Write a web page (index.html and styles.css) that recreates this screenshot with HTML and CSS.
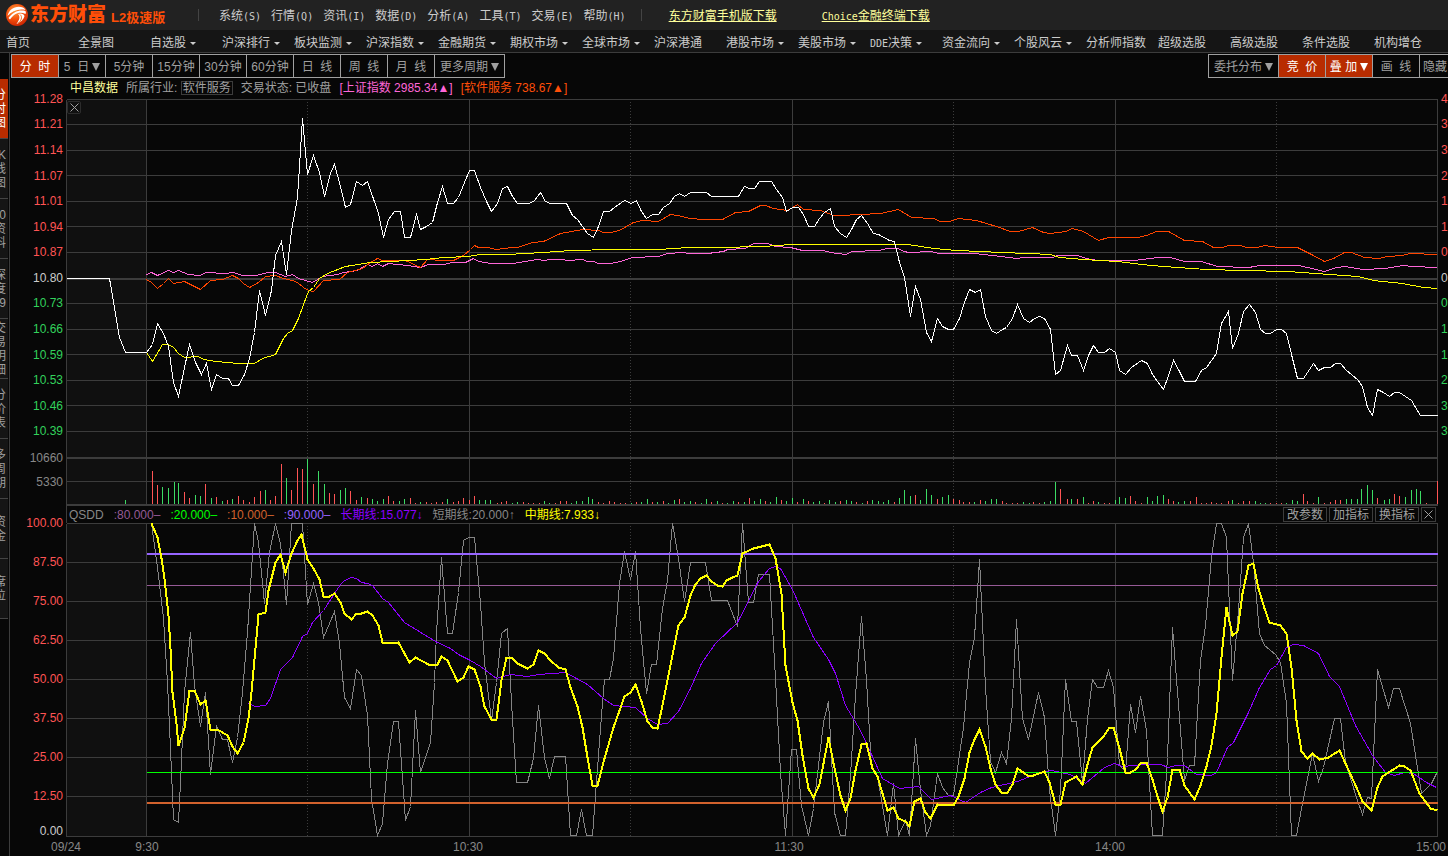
FILE: index.html
```html
<!DOCTYPE html>
<html lang="zh-CN">
<head>
<meta charset="utf-8">
<title>东方财富 L2极速版</title>
<link rel="stylesheet" href="styles.css">
</head>
<body>
<header class="titlebar">
  <div class="brand">
    <svg class="brand-mark" viewBox="0 0 22 22" aria-hidden="true">
      <defs><radialGradient id="ball" cx="0.4" cy="0.3" r="0.8"><stop offset="0" stop-color="#ff9a3c"/><stop offset="0.5" stop-color="#f4500c"/><stop offset="1" stop-color="#c41a00"/></radialGradient></defs>
      <circle cx="11" cy="11" r="11" fill="url(#ball)"/>
      <path d="M1.5 12C3 5 10 1 17 3.500C18 4 19 5 19.500 6C12 4.500 6 7 1.500 12Z" fill="#fff"/>
      <path d="M2.500 14C7 8 13 5.500 19.500 7C20 8 20 9 19.500 10C13 7 8 10 4 15.500Z" fill="#fff"/>
      <path d="M12 10C15 8.500 18 10 18.500 12C18 15 15 18 10.500 20C13.500 16 14.500 12.500 12 10Z" fill="#fff"/>
      <path d="M14 10.500C17 13 15 17 12 19.500" fill="none" stroke="#f26a1c"/>
    </svg>
    <span class="brand-name">东方财富</span>
    <span class="brand-edition">L2极速版</span>
  </div>
  <nav class="menu" aria-label="主菜单">
    <button type="button">系统<span class="half">(S)</span></button>
    <button type="button">行情<span class="half">(Q)</span></button>
    <button type="button">资讯<span class="half">(I)</span></button>
    <button type="button">数据<span class="half">(D)</span></button>
    <button type="button">分析<span class="half">(A)</span></button>
    <button type="button">工具<span class="half">(T)</span></button>
    <button type="button">交易<span class="half">(E)</span></button>
    <button type="button">帮助<span class="half">(H)</span></button>
  </nav>
  <div class="downloads">
    <a href="#mobile">东方财富手机版下载</a>
    <a href="#choice"><span class="half">Choice</span>金融终端下载</a>
  </div>
</header>
<nav class="channels" aria-label="频道">
  <a href="#1">首页</a>
  <a href="#2">全景图</a>
  <a href="#3" class="more">自选股</a>
  <a href="#4" class="more">沪深排行</a>
  <a href="#5" class="more">板块监测</a>
  <a href="#6" class="more">沪深指数</a>
  <a href="#7" class="more">金融期货</a>
  <a href="#8" class="more">期权市场</a>
  <a href="#9" class="more">全球市场</a>
  <a href="#10">沪深港通</a>
  <a href="#11" class="more">港股市场</a>
  <a href="#12" class="more">美股市场</a>
  <a href="#13" class="more"><span class="half">DDE</span>决策</a>
  <a href="#14" class="more">资金流向</a>
  <a href="#15" class="more">个股风云</a>
  <a href="#16">分析师指数</a>
  <a href="#17">超级选股</a>
  <a href="#18">高级选股</a>
  <a href="#19">条件选股</a>
  <a href="#20">机构增仓</a>
</nav>
<div class="workspace">
  <aside class="tabs">
    <button type="button" class="active"><span>分</span><span>时</span><span>图</span></button>
    <button type="button"><span>K</span><span>线</span><span>图</span></button>
    <button type="button"><span>10</span><span>资</span><span>料</span></button>
    <button type="button"><span>深</span><span>度</span><span>F9</span></button>
    <button type="button"><span>交</span><span>易</span><span>明</span><span>细</span></button>
    <button type="button"><span>分</span><span>价</span><span>表</span></button>
    <button type="button"><span>多</span><span>周</span><span>期</span></button>
    <button type="button"><span>资</span><span>金</span></button>
    <button type="button"><span>席</span><span>位</span></button>
  </aside>
  <main class="board">
    <div class="toolbar">
      <div class="group">
        <button type="button" class="on">分&nbsp; 时</button>
        <button type="button">5 &nbsp;日<i class="down"></i></button>
        <button type="button">5分钟</button>
        <button type="button">15分钟</button>
        <button type="button">30分钟</button>
        <button type="button">60分钟</button>
        <button type="button">日&nbsp; 线</button>
        <button type="button">周&nbsp; 线</button>
        <button type="button">月&nbsp; 线</button>
        <button type="button" class="wide">更多周期<i class="down"></i></button>
      </div>
      <div class="group group-end">
        <button type="button" class="wide">委托分布<i class="down"></i></button>
        <button type="button" class="on">竞&nbsp; 价</button>
        <button type="button" class="on">叠 加<i class="down"></i></button>
        <button type="button">画&nbsp; 线</button>
        <button type="button" class="start">隐藏</button>
      </div>
    </div>
    <div class="chart">
      <div class="axis axis-left">
        <div class="scale scale-price up">
          <span>11.28</span><span>11.21</span><span>11.14</span><span>11.07</span><span>11.01</span><span>10.94</span><span>10.87</span><span class="flat">10.80</span><span class="dn">10.73</span><span class="dn">10.66</span><span class="dn">10.59</span><span class="dn">10.53</span><span class="dn">10.46</span><span class="dn">10.39</span>
        </div>
        <div class="scale scale-volume"><span>10660</span><span>5330</span></div>
        <div class="scale scale-index up"><span>100.00</span><span>87.50</span><span>75.00</span><span>62.50</span><span>50.00</span><span>37.50</span><span>25.00</span><span>12.50</span><span class="flat last">0.00</span></div>
      </div>
      <div class="plots">
        <div class="quote">
          <strong class="name">中昌数据</strong>
          <span>所属行业: <a href="#sector" class="boxed">软件服务</a></span>
          <span>交易状态: 已收盘</span>
          <span class="pink">[上证指数 2985.34▲]</span>
          <span class="orange">[软件服务 738.67▲]</span>
        </div>
        <div class="pane">
          <button type="button" class="close pane-close" aria-label="关闭"><svg viewBox="0 0 9 9"><path d="M0.5 0.5L8.5 8.5M8.5 0.5L0.5 8.5"/></svg></button>
          <svg class="plot plot-price" viewBox="65.5 98.5 1372 407" preserveAspectRatio="none" role="img" aria-label="分时走势">
            <rect class="auction" x="66" y="99" width="80" height="406"/>
            <path class="grid" d="M66 99H1437M66 124H1437M66 150H1437M66 175H1437M66 201H1437M66 226H1437M66 252H1437M66 303H1437M66 329H1437M66 354H1437M66 380H1437M66 405H1437M66 431H1437M66 481H1437M66 99V505M146 99V505M469 99V505M792 99V505M1115 99V505M1437 99V505"/>
            <path class="grid bold" d="M66 278.5H1437M66 457.5H1437M66 504.5H1437"/>
            <path class="grid dots" d="M307 101V504M630 101V504M953 101V504M1276 101V504"/>
            <path class="vol-up" d="M152 503V470M157 503V484M184 503V491M189 503V497M205 503V483M216 503V496M227 503V499M238 503V495M243 503V499M249 503V501M254 503V496M260 503V490M270 503V499M275 503V495M281 503V463M291 503V489M297 503V467M302 503V468M313 503V483M329 503V492M334 503V493M350 503V490M356 503V499M367 503V497M388 503V495M393 503V500M410 503V497M415 503V502M426 503V501M431 503V502M436 503V501M442 503V501M453 503V501M458 503V500M463 503V497M469 503V499M474 503V495M497 503V502M501 503V501M506 503V500M523 503V501M528 503V502M533 503V502M539 503V502M555 503V502M560 503V500M566 503V500M598 503V501M603 503V502M609 503V500M614 503V501M620 503V502M625 503V502M636 503V501M652 503V501M663 503V500M679 503V498M695 503V501M711 503V501M722 503V502M738 503V501M749 503V497M765 503V500M781 503V499M797 503V501M808 503V500M824 503V502M840 503V500M856 503V501M867 503V500M894 503V501M915 503V494M937 503V498M953 503V498M959 503V499M963 503V501M969 503V501M980 503V499M1002 503V500M1006 503V502M1012 503V502M1017 503V502M1033 503V501M1039 503V502M1060 503V488M1067 503V498M1077 503V498M1088 503V502M1093 503V500M1104 503V502M1109 503V502M1130 503V495M1135 503V500M1141 503V502M1168 503V498M1173 503V500M1190 503V500M1196 503V496M1201 503V502M1206 503V502M1211 503V501M1216 503V502M1221 503V502M1228 503V500M1238 503V502M1243 503V500M1249 503V500M1270 503V502M1276 503V502M1281 503V502M1303 503V493M1307 503V500M1313 503V502M1324 503V502M1330 503V501M1335 503V499M1340 503V499M1377 503V497M1394 503V493M1399 503V495M1426 503V502M1437 503V480"/>
            <path class="vol-dn" d="M125 503V499M162 503V486M168 503V487M174 503V481M178 503V482M195 503V494M200 503V495M211 503V497M222 503V500M232 503V498M265 503V489M286 503V477M307 503V458M318 503V470M324 503V483M340 503V489M345 503V487M361 503V496M372 503V498M377 503V500M383 503V498M399 503V500M404 503V498M420 503V501M447 503V498M479 503V499M485 503V499M490 503V499M512 503V502M517 503V501M544 503V500M549 503V502M571 503V502M576 503V500M582 503V500M588 503V496M592 503V498M631 503V502M641 503V501M647 503V498M657 503V501M668 503V502M674 503V499M684 503V501M690 503V500M701 503V502M706 503V498M717 503V500M727 503V502M733 503V500M744 503V501M754 503V500M760 503V498M770 503V501M776 503V496M786 503V500M792 503V497M803 503V498M813 503V501M819 503V500M829 503V499M835 503V501M846 503V499M851 503V500M862 503V502M872 503V499M878 503V500M883 503V501M888 503V499M899 503V497M904 503V489M910 503V495M920 503V499M926 503V488M931 503V494M942 503V496M948 503V494M974 503V501M985 503V500M991 503V498M996 503V498M1023 503V501M1029 503V502M1044 503V501M1050 503V500M1055 503V481M1071 503V498M1083 503V496M1098 503V501M1115 503V499M1119 503V496M1125 503V497M1147 503V496M1152 503V500M1157 503V495M1163 503V494M1178 503V501M1184 503V500M1232 503V499M1255 503V500M1260 503V502M1265 503V502M1286 503V502M1292 503V499M1297 503V500M1318 503V496M1346 503V498M1351 503V498M1357 503V498M1361 503V488M1367 503V484M1372 503V489M1384 503V499M1389 503V498M1405 503V496M1411 503V489M1416 503V488M1420 503V490"/>
            <polyline class="line pink-line" points="146,274 151,272 157,275 168,270 173,272 178,270 188,274 199,275 206,272 225,273 233,272 242,275 255,275 268,272 275,272 285,276 292,274 298,278 312,282 322,276 337,274 343,272 357,270 367,264 372,266 377,263 382,266 388,263 407,265 420,267 428,264 443,264 452,262 465,262 473,258 478,261 485,262 490,263 513,263 530,260 538,259 543,260 550,259 562,259 567,260 582,259 587,261 593,261 598,263 610,263 620,261 632,257 658,256 667,253 683,252 688,253 707,253 723,251 727,249 745,248 753,243 767,243 775,246 790,247 802,250 823,250 830,252 845,254 852,251 878,250 887,248 898,248 903,251 909,252 931,251 938,253 974,253 992,255 1016,258 1023,257 1052,257 1057,255 1077,255 1086,258 1097,260 1134,260 1157,257 1170,257 1184,261 1201,261 1217,266 1248,267 1260,265 1298,265 1307,267 1324,271 1336,267 1345,266 1362,269 1385,268 1403,265 1412,266 1437,267"/>
            <polyline class="line orange-line" points="146,279 151,282 157,288 163,283 168,278 173,283 184,281 200,289 210,280 222,279 232,275 238,278 243,283 249,287 258,282 265,276 275,275 283,278 292,280 297,282 303,287 308,290 313,291 323,280 339,279 347,272 362,268 370,262 377,258 382,260 405,260 420,267 427,259 442,260 453,260 463,255 470,249 474,245 478,247 487,247 496,249 512,247 517,247 532,242 543,241 560,233 582,229 598,230 603,232 610,232 619,230 633,222 642,220 658,221 670,214 677,215 690,218 703,219 722,219 735,212 748,211 760,205 765,205 773,208 787,210 797,204 803,209 820,210 833,215 840,215 880,213 898,209 911,217 933,218 940,221 949,221 958,218 976,220 996,226 1010,231 1018,231 1032,227 1043,232 1050,233 1065,231 1072,228 1083,231 1098,240 1108,237 1137,237 1146,235 1156,231 1168,231 1184,240 1202,241 1213,247 1222,247 1228,245 1240,245 1246,247 1257,247 1264,245 1278,247 1297,247 1311,254 1324,261 1333,258 1344,252 1351,252 1364,257 1378,258 1387,256 1402,255 1409,253 1437,254"/>
            <polyline class="line yellow-line" points="146,352 152,361 162,344 168,344 173,347 178,353 184,357 198,356 203,359 215,361 227,362 238,363 254,363 262,358 275,354 283,338 287,333 292,330 298,318 303,304 308,291 313,287 319,278 327,273 345,266 370,262 390,261 425,259 443,257 468,256 480,254 507,254 543,252 570,250 613,249 658,249 688,247 717,247 763,246 790,244 907,244 934,248 956,250 981,251 1000,252 1029,253 1050,254 1059,257 1083,259 1117,261 1141,264 1163,266 1206,269 1242,270 1288,271 1315,273 1358,276 1373,280 1402,283 1423,287 1437,288"/>
            <polyline class="line white-line" points="66,278 109,278 119,337 125,352 146,352 152,344 157,323 163,333 168,346 173,382 178,396 184,367 189,344 195,362 201,374 206,363 211,389 216,374 222,378 228,378 232,385 238,385 244,374 249,358 254,332 259,290 265,315 271,290 275,255 281,241 286,274 291,230 297,197 302,118 307,174 313,155 319,172 324,196 330,173 334,164 340,186 345,207 350,204 356,181 362,185 367,181 378,213 383,237 388,219 394,211 400,211 404,237 410,237 416,214 420,229 426,226 432,222 437,202 442,186 447,203 453,203 458,197 464,182 469,170 474,170 480,187 486,201 491,211 497,203 502,188 507,186 512,196 517,203 529,203 534,200 540,192 545,201 550,203 566,203 572,215 577,219 587,233 593,237 598,226 603,211 609,211 614,207 624,200 631,203 636,200 641,211 646,218 652,214 658,214 663,207 669,203 674,196 679,193 684,196 690,192 706,192 711,196 738,196 744,186 749,188 754,188 759,181 771,181 776,189 782,197 786,211 792,207 798,207 803,214 808,226 814,226 819,218 824,212 830,208 834,226 840,233 846,237 851,229 856,219 861,215 867,223 873,233 878,234 889,240 894,241 899,262 904,277 910,316 915,286 920,299 926,332 931,341 937,318 942,326 948,329 953,329 959,318 964,302 969,289 975,292 980,289 985,316 991,330 996,333 1002,329 1006,327 1012,318 1017,304 1023,318 1029,322 1034,318 1039,316 1044,318 1050,329 1055,374 1060,370 1067,345 1071,355 1077,355 1083,370 1088,355 1093,345 1098,352 1104,352 1109,348 1115,352 1119,370 1125,374 1131,367 1141,360 1147,363 1152,374 1157,381 1163,389 1168,375 1173,360 1179,371 1184,381 1195,381 1201,370 1206,367 1211,360 1216,353 1221,323 1228,311 1232,348 1238,333 1243,311 1249,304 1255,312 1260,329 1265,333 1270,333 1276,329 1281,329 1286,333 1292,358 1297,378 1303,378 1313,363 1318,370 1324,367 1330,367 1335,363 1340,363 1346,370 1357,379 1362,386 1367,407 1372,415 1377,389 1383,392 1389,396 1394,392 1399,392 1411,400 1420,415 1437,415"/>
          </svg>
        </div>
        <div class="legend">
          <div class="legend-items">
            <span>QSDD</span>
            <span class="c80">:80.000–</span>
            <span class="c20">:20.000–</span>
            <span class="c10">:10.000–</span>
            <span class="c90">:90.000–</span>
            <span class="long">长期线:15.077↓</span>
            <span class="short">短期线:20.000↑</span>
            <span class="mid">中期线:7.933↓</span>
          </div>
          <div class="legend-tools">
            <button type="button">改参数</button>
            <button type="button">加指标</button>
            <button type="button">换指标</button>
            <button type="button" class="close" aria-label="关闭"><svg viewBox="0 0 9 9"><path d="M0.5 0.5L8.5 8.5M8.5 0.5L0.5 8.5"/></svg></button>
          </div>
        </div>
        <svg class="plot plot-index" viewBox="65.5 522.5 1372 314" preserveAspectRatio="none" role="img" aria-label="QSDD 指标">
          <rect class="auction" x="66" y="523" width="80" height="313"/>
          <path class="grid" d="M66 523H1437M66 562H1437M66 601H1437M66 640H1437M66 679H1437M66 718H1437M66 757H1437M66 796H1437M66 836H1437M66 523V836M146 523V836M469 523V836M792 523V836M1115 523V836M1437 523V836"/>
          <path class="grid dots" d="M307 525V836M630 525V836M953 525V836M1276 525V836"/>
          <path class="level level-80" d="M146 585H1436"/>
          <polyline class="line gray-line" points="151,523 157,567 163,618 167,682 170,748 173,819 178,822 180,782 184,692 190,632 194,685 200,726 205,692 210,774 216,726 222,739 227,739 232,762 237,737 242,692 247,632 254,523 258,542 264,603 269,552 275,523 280,543 286,604 291,523 302,523 307,604 313,583 318,602 323,637 329,623 334,611 339,643 344,697 350,708 356,669 361,675 367,715 371,798 377,835 382,823 387,763 393,721 398,721 405,820 410,806 415,710 420,772 430,742 434,682 436,632 441,557 447,633 452,633 458,592 463,540 468,537 474,537 480,603 484,662 491,720 496,682 501,633 507,628 511,702 516,782 527,782 533,758 538,705 544,757 549,778 554,756 565,756 570,835 576,835 581,809 586,835 592,835 597,768 601,715 604,679 609,679 613,658 619,583 624,551 630,579 635,551 640,628 646,693 651,664 656,664 662,608 667,580 672,523 678,558 684,601 690,562 705,562 711,600 727,600 737,626 742,523 748,602 753,602 758,574 769,574 775,678 780,772 785,835 791,749 796,749 801,805 808,835 813,808 823,722 828,701 834,812 840,835 845,835 850,775 855,695 861,616 866,680 871,767 877,776 887,835 893,783 898,835 905,820 909,835 915,738 920,790 926,835 930,825 937,773 942,787 948,795 953,795 963,727 969,662 974,637 979,559 985,687 990,761 995,772 1001,752 1006,763 1011,718 1016,619 1022,718 1028,739 1038,692 1044,717 1049,790 1055,835 1060,790 1065,679 1071,721 1076,721 1082,782 1087,718 1092,679 1097,687 1103,687 1108,670 1113,687 1119,765 1125,771 1130,704 1135,732 1140,696 1146,730 1152,835 1162,835 1167,757 1172,627 1179,717 1184,780 1189,765 1194,765 1200,660 1205,625 1211,557 1216,523 1221,523 1226,537 1232,680 1238,610 1243,537 1248,523 1253,562 1259,633 1264,645 1275,654 1280,662 1286,703 1291,835 1296,835 1302,803 1312,753 1318,781 1323,767 1334,718 1340,718 1345,762 1356,797 1362,814 1367,797 1371,798 1377,669 1388,707 1393,688 1399,688 1410,723 1421,793 1431,783 1436,773"/>
          <polyline class="line purple-line" points="248,703 255,706 265,705 270,698 280,669 292,657 302,636 307,633 312,622 323,610 340,584 344,580 351,577 356,578 361,582 367,583 372,585 382,598 388,602 404,622 435,641 450,648 458,654 470,660 480,666 496,678 510,674 527,676 538,674 565,672 587,684 603,698 613,705 635,707 647,718 657,724 667,723 678,711 690,688 701,663 715,643 737,622 758,581 769,568 775,566 780,568 792,589 813,637 828,659 835,673 845,705 860,730 866,743 882,778 899,788 918,786 931,799 950,795 965,802 980,792 991,787 1017,781 1040,772 1051,770 1070,774 1085,783 1104,767 1114,763 1122,766 1145,764 1160,764 1168,767 1175,765 1184,765 1196,774 1211,775 1216,772 1227,747 1233,742 1248,712 1259,687 1270,669 1276,665 1286,647 1293,644 1303,645 1318,653 1329,676 1339,686 1355,725 1372,755 1385,772 1394,775 1404,772 1413,773 1426,782 1436,787"/>
          <path class="level level-20" d="M146 772H1437"/>
          <path class="level level-10" d="M146 802.5H1437"/>
          <path class="level level-90" d="M146 553.5H1437"/>
          <polyline class="line mid-line" points="151,523 157,537 161,558 164,578 168,615 170,648 172,692 176,723 178,745 184,728 189,690 194,690 200,704 205,700 210,729 217,729 227,735 232,746 237,753 243,742 248,718 251,692 255,648 258,614 265,612 268,590 275,562 280,554 285,572 291,553 297,540 301,534 307,559 313,568 319,579 323,596 329,596 334,593 340,602 344,613 351,619 356,613 361,613 367,611 372,615 378,625 382,642 387,643 398,642 409,662 415,657 428,664 437,664 441,656 447,660 457,681 463,677 468,666 474,669 480,686 484,706 491,719 496,719 501,680 506,657 511,657 517,663 527,668 533,664 538,650 544,653 550,660 558,667 565,669 570,687 577,706 582,727 587,757 592,785 597,785 604,758 613,727 624,696 630,692 635,684 641,701 647,721 652,727 657,728 662,705 667,680 673,650 678,625 684,617 690,595 695,584 700,578 706,575 711,581 717,585 722,586 726,580 732,577 737,575 742,553 753,548 769,544 775,558 781,593 785,665 792,702 797,720 802,755 808,788 813,797 819,784 828,737 833,763 840,795 845,810 850,798 855,770 861,744 866,743 872,768 877,776 887,810 893,807 898,818 905,821 909,826 914,801 920,798 925,812 930,818 937,804 953,805 958,796 964,778 969,752 974,739 979,729 985,746 990,768 995,784 1001,792 1007,792 1012,784 1017,768 1027,775 1033,775 1044,771 1049,782 1055,804 1060,804 1065,782 1076,776 1082,784 1087,764 1092,747 1103,736 1109,727 1113,727 1119,748 1125,772 1130,772 1135,769 1141,762 1146,762 1152,779 1157,796 1162,811 1167,797 1172,769 1179,769 1184,785 1194,799 1200,785 1206,766 1211,745 1216,713 1221,657 1226,607 1232,635 1237,631 1242,593 1248,565 1253,563 1258,588 1264,608 1269,622 1280,625 1286,633 1291,667 1296,720 1301,751 1307,758 1312,753 1319,759 1328,757 1339,750 1345,763 1356,787 1362,801 1371,810 1377,787 1382,776 1399,765 1404,766 1410,770 1419,793 1430,808 1437,810"/>
        </svg>
      </div>
      <div class="axis axis-right">
        <div class="scale scale-price up">
          <span>4</span><span>3</span><span>3</span><span>2</span><span>1</span><span>1</span><span>0</span><span class="flat">0</span><span class="dn">0</span><span class="dn">1</span><span class="dn">1</span><span class="dn">2</span><span class="dn">3</span><span class="dn">3</span>
        </div>
      </div>
    </div>
    <div class="timeline">
      <time class="day">09/24</time>
      <div class="hours"><time>9:30</time><time>10:30</time><time>11:30</time><time>14:00</time><time>15:00</time></div>
    </div>
  </main>
</div>
</body>
</html>
```
FILE: styles.css
```css
* { box-sizing: border-box; }
body {
  margin: 0;
  background: #070707;
  color: #a0a0a0;
  font: 12px/16px "Liberation Sans", "Noto Sans CJK SC", sans-serif;
  overflow-x: hidden;
}
button {
  margin: 0;
  padding: 0;
  border: 0;
  background: none;
  color: inherit;
  font: inherit;
  white-space: nowrap;
  cursor: pointer;
}
a { color: inherit; text-decoration: none; }
.half { font: 10px/16px "DejaVu Sans Mono", monospace; }

/* Title bar */
.titlebar {
  display: flex;
  align-items: center;
  height: 30px;
  padding-left: 6px;
  background: #222;
  color: #ccc;
  white-space: nowrap;
}
.brand { display: flex; align-items: center; width: 192px; color: #ff4e08; }
.brand-mark { width: 22px; height: 22px; }
.brand-name { margin-left: 2px; font-size: 19px; line-height: 22px; font-weight: 900; }
.brand-edition { margin-left: 5px; padding-top: 6px; font-size: 13px; font-weight: 700; }
.menu {
  display: flex;
  gap: 10px;
  padding: 0 15px 0 20px;
  border: solid #444;
  border-width: 0 1px;
}
.menu button { height: 12px; padding-top: 1px; line-height: 12px; }
.menu .half { line-height: 12px; }
.downloads { display: flex; gap: 45px; margin-left: 27px; padding-top: 2px; color: #ffff9c; }
.downloads a { text-decoration: underline; }

/* Channel bar */
.channels {
  display: grid;
  grid-auto-flow: column;
  grid-auto-columns: 72px;
  height: 23px;
  padding: 5px 0 0 6px;
  border-bottom: 1px solid #3c3c3c;
  background: #151515;
  color: #ccc;
  overflow: hidden;
  white-space: nowrap;
}
.channels .more::after {
  content: "";
  display: inline-block;
  margin-left: 4px;
  border: 3px solid transparent;
  border-top-color: #ccc;
  border-bottom: 0;
  vertical-align: 2px;
}

/* Side tabs, docked against the window's left edge */
.workspace { display: flex; }
.tabs {
  flex: none;
  width: 10px;
  padding-top: 26px;
  padding-right: 1px;
  border-right: 1px solid #3c3c3c;
  overflow: hidden;
}
.tabs button {
  display: flex;
  flex-direction: column;
  align-items: flex-end;
  justify-content: center;
  width: 8px;
  height: 60px;
  padding-right: 2px;
  border-bottom: 1px solid #444;
  background: #151515;
  line-height: 14px;
  overflow: hidden;
}
.tabs .active { background: #b82c00; color: #fff; }

/* Toolbar */
.board { flex: 1; min-width: 0; overflow: hidden; }
.toolbar { display: flex; justify-content: space-between; padding: 1px 0 0 1px; }
.group { display: flex; }
.group-end { margin-right: -19px; }
.group button {
  width: 48px;
  height: 24px;
  padding-top: 1px;
  border: 1px solid #a0a0a0;
}
.group button + button { margin-left: -1px; }
.group .wide { width: 71px; }
.group .on { background: #b82c00; color: #fff; }
.group .start { padding-left: 3px; text-align: left; }
.down {
  display: inline-block;
  margin-left: 3px;
  border: 4px solid transparent;
  border-top: 8px solid currentColor;
  border-bottom: 0;
}

/* Chart area: scale, plots, scale */
.chart { display: grid; grid-template-columns: 56px minmax(0, 1fr) 10px; }
.axis { padding-top: 8px; overflow: hidden; }
.axis-left { padding-right: 3px; text-align: right; }
.axis-right { padding-left: 3px; }
.scale { display: flex; flex-direction: column; color: #888; }
.scale span { display: flex; flex: 1; align-items: center; }
.axis-left .scale span { justify-content: flex-end; }
.scale-price { height: 358px; }
.scale-volume { height: 59px; padding: 2px 0 9px; }
.scale-index span { flex: 0 0 39px; }
.scale-index .last { flex-basis: 22px; align-items: flex-end; line-height: 12px; }
.up { color: #ff5454; }
.scale .flat { color: #ccc; }
.scale .dn { color: #32d25c; }

.quote {
  display: flex;
  align-items: center;
  gap: 8px;
  height: 21px;
  padding: 0 0 2px 4px;
  white-space: nowrap;
}
.name { color: #ffff9c; font-weight: 400; }
.boxed { padding: 0 1px; border: 1px solid #3c3c3c; line-height: 12px; display: inline-block; }
.pink { color: #ff66d8; }
.orange { color: #ff4e08; }

.pane { position: relative; }
.plot { display: block; width: 100%; shape-rendering: crispEdges; }
.plot-price { height: 407px; }
.plot-index { height: 314px; }
.plot path, .plot polyline { fill: none; vector-effect: non-scaling-stroke; }
.auction { fill: #101010; }
.grid { stroke: #3c3c3c; }
.bold { stroke-width: 2; }
.dots { stroke-dasharray: 1 2; }
.vol-up { stroke: #ff5454; }
.vol-dn { stroke: #3cdc64; }
.white-line { stroke: #fff; }
.yellow-line { stroke: #ff0; }
.orange-line { stroke: #ff4500; }
.pink-line { stroke: #ff66d8; }
.gray-line { stroke: #848484; }
.purple-line { stroke: #8c00ff; }
.mid-line { stroke: #ff0; stroke-width: 2; }
.level-80 { stroke: #965a96; }
.level-20 { stroke: #0f0; }
.level-10 { stroke: #d2622d; stroke-width: 2; }
.level-90 { stroke: #9664ff; stroke-width: 2; }

.close svg { display: block; width: 9px; height: 9px; margin: auto; }
.close path { fill: none; stroke: #a0a0a0; }
.pane-close {
  position: absolute;
  top: 2px;
  left: 1px;
  width: 14px;
  height: 13px;
  border: 1px solid #2c2c2c;
  border-radius: 2px;
}

.legend {
  display: flex;
  justify-content: space-between;
  align-items: center;
  height: 17px;
  padding: 0 2px;
  border-left: 1px solid #3c3c3c;
  white-space: nowrap;
}
.legend-items { display: flex; gap: 10px; color: #888; }
.c80 { color: #965a96; }
.c20 { color: #0f0; }
.c10 { color: #d2622d; }
.c90 { color: #9664ff; }
.long { color: #8c00ff; }
.mid { color: #ff0; }
.legend-tools { display: flex; gap: 2px; }
.legend-tools button {
  width: 44px;
  height: 15px;
  border: 1px solid #3c3c3c;
  line-height: 14px;
}
.legend-tools .close { width: 15px; }

.timeline { display: flex; height: 19px; padding: 2px 1px 0 41px; color: #888; }
.day { width: 80px; }
.hours { display: flex; flex: 1; justify-content: space-between; }
.hours time { width: 32px; text-align: center; }
```
